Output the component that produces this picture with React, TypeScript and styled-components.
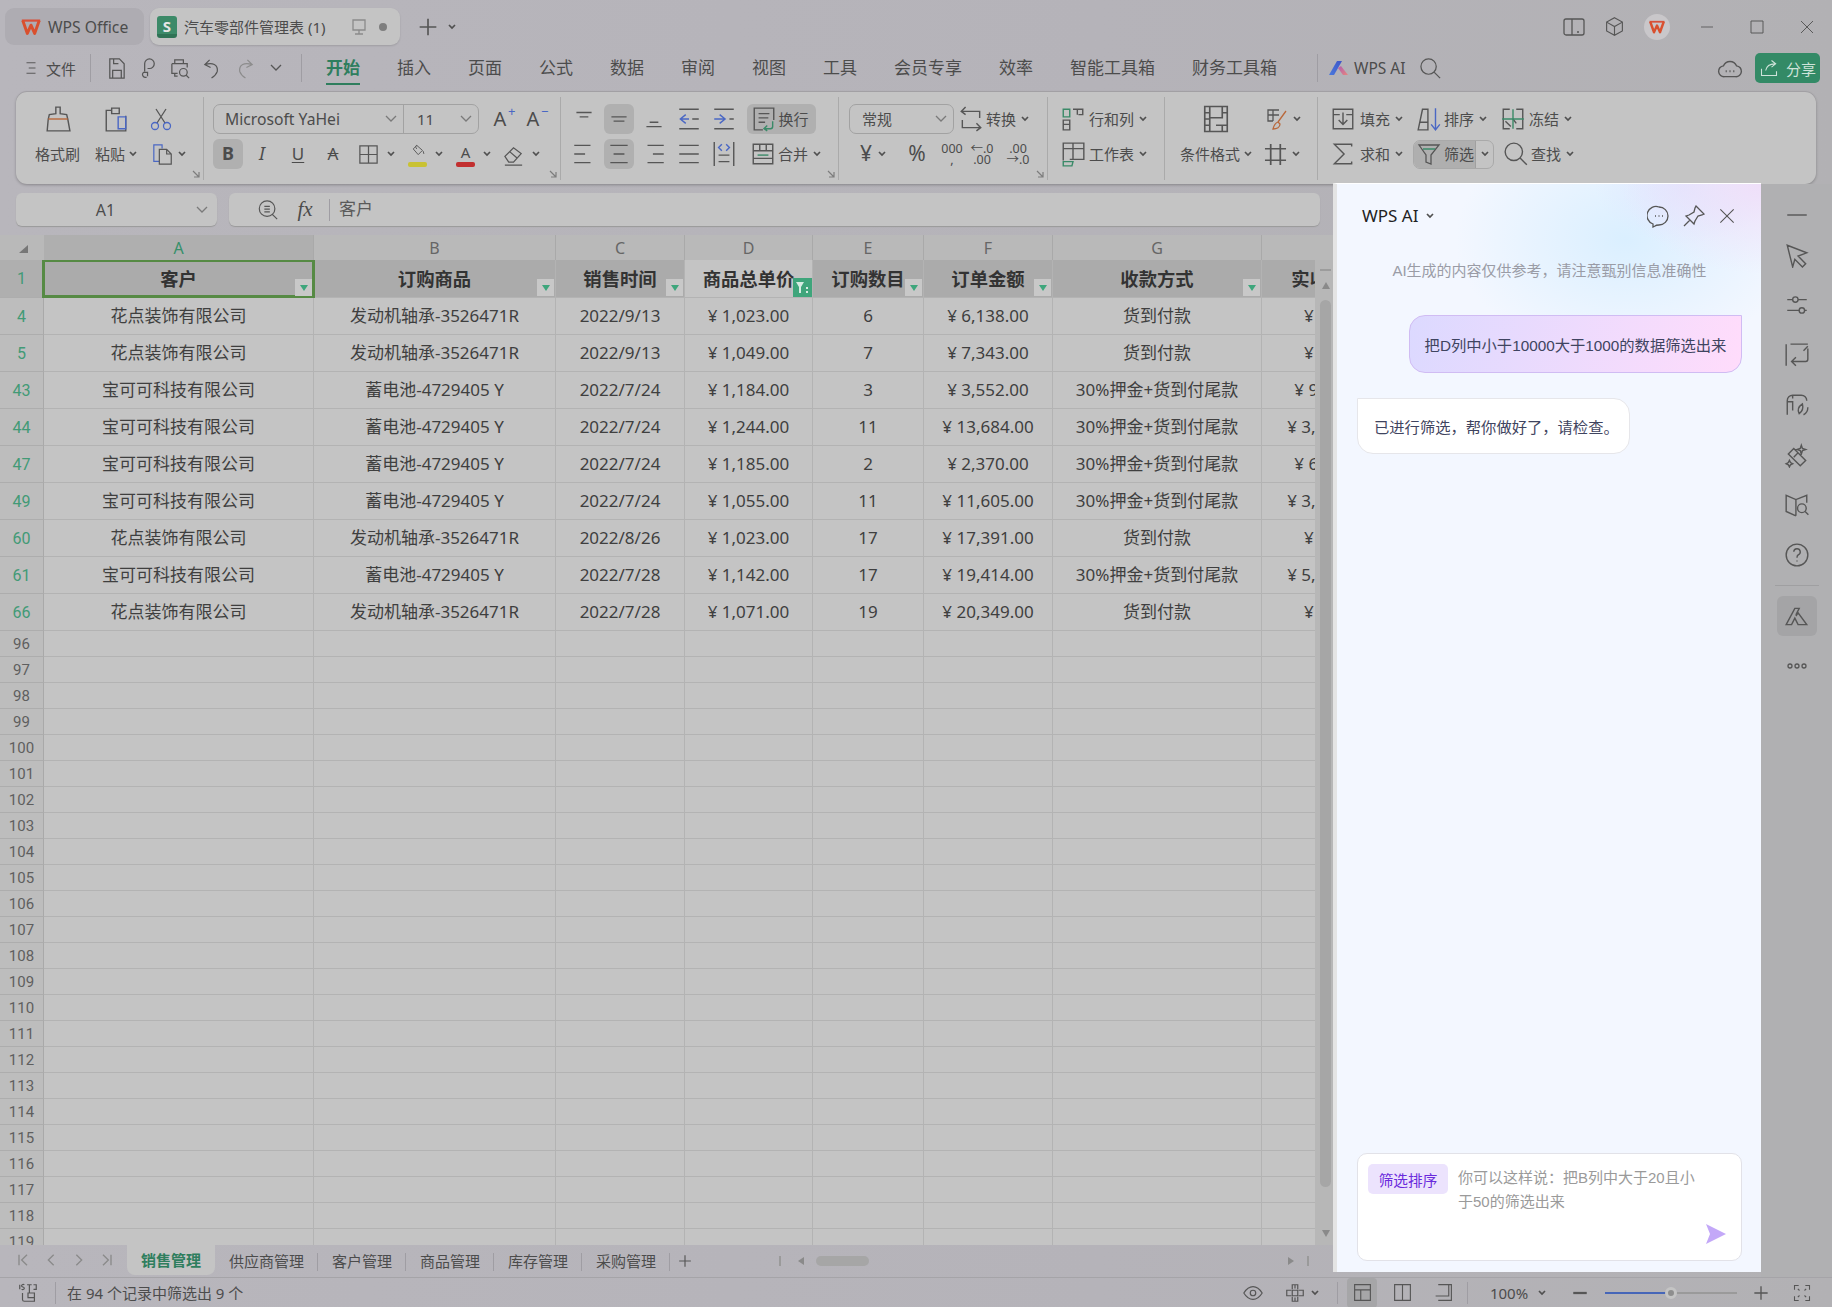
import React from 'react';
import styled, { createGlobalStyle } from 'styled-components';

const GlobalStyle = createGlobalStyle`
  html, body {
    margin: 0;
    padding: 0;
    overflow: hidden;
  }
  * {
    box-sizing: border-box;
  }
`;

const BLUE = '#4a67c4';
const GREEN = '#3a8a68';
const ORANGE = '#b9683b';

const Svg = styled.svg<{ $big?: boolean }>`
  fill: none;
  stroke: #565656;
  stroke-width: 1.3;
  flex: none;
  display: block;
  margin: ${(p) => (p.$big ? '0 -3px' : '0')};
`;

const CaretSvg = styled.svg`
  fill: none;
  stroke: #505050;
  stroke-width: 1.7;
  flex: none;
`;
const Caret = () => (
  <CaretSvg width="8" height="6" viewBox="0 0 8 6">
    <path d="M1 1l3 3 3-3" />
  </CaretSvg>
);
const Chevron = () => (
  <Svg width="14" height="10" viewBox="0 0 14 10" style={{ stroke: '#7a7a7a' }}>
    <path d="M2 2l5 5 5-5" />
  </Svg>
);

const WpsLogo: React.FC<{ s?: number }> = ({ s = 22 }) => (
  <Svg width={s} height={s} viewBox="0 0 24 24">
    <path d="M2 5h20" stroke="#d9503a" strokeWidth="2.4" />
    <path d="M3 5l5 14 4-9 4 9 5-14" stroke="#d9502e" strokeWidth="3.2" strokeLinejoin="round" />
  </Svg>
);

const AiLogo = () => (
  <Svg width="20" height="16" viewBox="0 0 20 16" style={{ stroke: 'none' }}>
    <defs>
      <linearGradient id="aia" x1="0" y1="1" x2="1" y2="0">
        <stop offset="0" stopColor="#4a78dc" />
        <stop offset="1" stopColor="#3f56c8" />
      </linearGradient>
      <linearGradient id="aib" x1="0" y1="0" x2="1" y2="1">
        <stop offset="0" stopColor="#b05fb0" />
        <stop offset="1" stopColor="#e6857f" />
      </linearGradient>
    </defs>
    <path d="M0 15L8 1h5L5 15z" fill="url(#aia)" />
    <path d="M9 8l3-2 7 9h-5z" fill="url(#aib)" />
  </Svg>
);

const icons = {
  hamburger: <path d="M6 5h12M9 12h9M6 19h12" />,
  save: <path d="M5 2h10l5 5v15H5zM8 14h9v8H8zM9 2v5h5" />,
  link: <path d="M10 21a3 3 0 0 1-4-4l1-1h4v4M8 15V7a5 5 0 1 1 5 5h-2" />,
  preview: (
    <>
      <path d="M6 7V3h9v4M3 7h16v4M3 7v10h6M6 17v3h3" />
      <circle cx="15" cy="16" r="4" />
      <path d="M18 19l3 3" />
    </>
  ),
  undo: <path d="M9 3L4 8l6 3M4 8c8-3 14 0 13 7-1 3-3 5-6 7" />,
  redo: <path d="M15 3l5 5-6 3M20 8c-8-3-14 0-13 7 1 3 3 5 6 7" stroke="#8c8c8c" />,
  brush: (
    <>
      <path d="M10 1h4v6l6 1 1 4 2 11H2l1-11 1-4 6-1z" />
      <path d="M3 12h18" stroke={ORANGE} />
    </>
  ),
  paste: (
    <>
      <path d="M8 4H3v19h18V9M8 2h7v5H8z" />
      <path d="M14 10h7v11h-7z" stroke={BLUE} />
    </>
  ),
  scissors: (
    <>
      <path d="M8 16L17 2M16 16L7 2" />
      <circle cx="6" cy="19" r="3.5" stroke={BLUE} />
      <circle cx="18" cy="19" r="3.5" stroke={BLUE} />
    </>
  ),
  copy: (
    <>
      <path d="M8 20H2V2h9v4" stroke={BLUE} />
      <path d="M8 7h8l5 5v11H8zM16 7v5h5" />
    </>
  ),
  border: <path d="M3 3h18v18H3zM12 3v18M3 12h18" />,
  bucket: <path d="M11 2l-5 5 7 8 6-6zM11 2c-2 0-2 3 0 5M20 10l1 4" />,
  eraser: <path d="M3 14l9-9 8 6-8 9H7zM8 9l8 7M3 23h18" />,
  alignTop: <path d="M5 6h14M8 10h8" />,
  alignMid: <path d="M5 10h14M7 14h10" />,
  alignBot: <path d="M8 15h8M5 19h14" />,
  indentL: (
    <>
      <path d="M3 3h18M3 21h18M15 12h6" />
      <path d="M9 8l-5 4 5 4M4 12h8" stroke={BLUE} />
    </>
  ),
  indentR: (
    <>
      <path d="M3 3h18M3 21h18M17 12h4" />
      <path d="M8 8l5 4-5 4M3 12h10" stroke={BLUE} />
    </>
  ),
  left: <path d="M3 4h15M3 12h10M3 20h15" />,
  center: <path d="M4 4h16M7 12h10M4 20h16" />,
  right: <path d="M6 4h15M11 12h10M6 20h15" />,
  justify: <path d="M3 4h18M3 12h18M3 20h18" />,
  distribute: (
    <>
      <path d="M3 1v22M21 1v22M7 13h10M7 19h10" />
      <path d="M10 3L7 6l3 3M14 3l3 3-3 3" stroke={BLUE} />
    </>
  ),
  wrap: (
    <>
      <path d="M21 13V2H3v20h8M7 7h10M7 11h9M7 15h6" />
      <path d="M20 14v5a2 2 0 0 1-2 2h-5M15 18l-3 3 3 2" stroke={GREEN} />
    </>
  ),
  merge: (
    <>
      <path d="M3 3h18v18H3zM3 9h18M9 3v6M15 3v6M3 16h18" />
      <path d="M7 13h10" stroke={GREEN} />
    </>
  ),
  convert: <path d="M7 1L3 5l4 3M3 5h17v6M4 13v7h17M17 16l4 4-4 3" />,
  rowcol: (
    <>
      <path d="M3 3h6v7H3z" stroke={GREEN} />
      <path d="M3 13h6v9H3zM3 17h6M12 3h9v5h-4M16 3v5" />
    </>
  ),
  sheet: (
    <>
      <path d="M3 18V2h19v15H9M3 7h19M12 2v15" />
      <path d="M3 19h9l-1 4H3z" stroke={GREEN} />
    </>
  ),
  cond: <path d="M7 2H3v20h4M17 2h4v20h-4M7 2h10v9H7zM3 7h4M3 12h4M3 17h4M17 7h4M17 17h4M7 11v11h10v-5H12" />,
  paint: (
    <>
      <path d="M14 3H3v11h5M3 8h11M8 3v11" />
      <path d="M21 4l-8 11M13 15c-3 1-4 3-5 7 4 0 7-2 7-5z" stroke={ORANGE} />
    </>
  ),
  cellsize: <path d="M7 1v22M17 1v22M1 6h22M1 18h22" strokeWidth="1.8" />,
  fill: <path d="M3 3h18v18H3zM3 8h6M15 8h6M12 6v11M8 13l4 4 4-4" />,
  sum: <path d="M20 5V3H4l9 9-9 9h16v-2" />,
  sort: (
    <>
      <path d="M2 22L6 3h5v19zM4 15h7" />
      <path d="M18 2v20M14 17l4 5 4-5" stroke={BLUE} />
    </>
  ),
  freeze: (
    <>
      <path d="M9 3H3v18h6M15 3h6v18h-6M5 14l5 5M12 12l3 4" />
      <path d="M2 12h20M12 3v18" stroke={GREEN} />
    </>
  ),
  funnel: (
    <>
      <path d="M2 3h20l-8 10v9l-5-2v-7z" />
      <path d="M6 7h12" stroke={GREEN} />
    </>
  ),
  find: <path d="M10 2a8 8 0 1 0 0 16 8 8 0 0 0 0-16zM16 16l6 6" />,
  zoomDoc: <path d="M11 2a8.500 8.500 0 1 0 0 17 8.500 8.500 0 0 0 0-17zM8 8h6M8 11h6M8 14h6M17 17l5 5" />,
  tablet: <path d="M2 6a2 2 0 0 1 2-2h16a2 2 0 0 1 2 2v12a2 2 0 0 1-2 2H4a2 2 0 0 1-2-2zM10 4v16M15 17h2" />,
  cube: <path d="M12 2l9 5v10l-9 5-9-5V7zM3 7l9 5 9-5M12 12v10" />,
  minus: <path d="M3 12h18" />,
  square: <path d="M4 4h16v16H4z" />,
  close: <path d="M4 4l16 16M20 4L4 20" />,
  plus: <path d="M12 2v20M2 12h20" strokeWidth="2" />,
  cloud: (
    <>
      <path d="M7 20a5 5 0 0 1-1-10 6.500 6.500 0 0 1 12 0 5 5 0 0 1-1 10z" />
      <path d="M8 15h1M11.500 15h1M15 15h1" strokeWidth="1.800" />
    </>
  ),
  share: <path d="M3 13v8h18v-5M8 15c1-5 5-8 11-8M15 3l5 4-5 4" stroke="#cfe3da" />,
  chat: <path d="M12 3a9 9 0 0 1 0 18c-2 0-3 0-4 1l-2 1v-3a9 9 0 0 1 6-17zM8 12h1M11.500 12h1M15 12h1" />,
  pin: <path d="M14 2l8 8-2 1-4 1-3 5-1 3-8-8 3-1 5-3 1-4zM8 16l-6 6" />,
  cursor: <path d="M3 3l18 7-8 3 7 7-3 3-7-7-2 7z" />,
  sliders: (
    <>
      <path d="M3 7h5M13 7h8M3 17h11M19 17h2" />
      <circle cx="10.500" cy="7" r="2.500" />
      <circle cx="16.500" cy="17" r="2.500" />
    </>
  ),
  swap: <path d="M2 2v20M6 2h16M22 6v10a2 2 0 0 1-2 2H7M11 14l-4 4 4 4M18 8l4-4" />,
  aiLeaf: <path d="M3 21V8a5 5 0 0 1 5-5h8a5 5 0 0 1 5 5M3 9h5v8M8 3v3M14 20c-2-4 0-7 3-9 1 4 0 7-3 9zM18 21c2-1 4-3 4-7" />,
  wand: <path d="M4 11l5-5 11 11-5 5zM9 14l4-4M16 3l1 3 3 1-3 1-1 3-1-3-3-1 3-1zM5 17l1 2 2 1-2 1-1 2-1-2-2-1 2-1z" />,
  bookFind: (
    <>
      <path d="M11 22l-9-4V3l9 4 10-4v7M11 7v15" />
      <circle cx="16.500" cy="15" r="4" />
      <path d="M19.500 18l3 3" />
    </>
  ),
  help: <path d="M12 2a10 10 0 1 0 0 20 10 10 0 0 0 0-20zM9 9a3 3 0 1 1 4 3c-1 .5-1 1-1 2.500M12 17v1" />,
  aiMark: <path d="M2 20l8-15h4l-3 6 2-2 8 11h-8l-3-6-3 6zM13 9l-2 3" />,
  dots: (
    <>
      <circle cx="5" cy="12" r="2" />
      <circle cx="12" cy="12" r="2" />
      <circle cx="19" cy="12" r="2" />
    </>
  ),
  first: <path d="M6 4v16M18 4l-8 8 8 8" stroke="#8a8a8a" strokeWidth="2" />,
  prev: <path d="M16 4l-8 8 8 8" stroke="#8a8a8a" strokeWidth="2" />,
  next: <path d="M8 4l8 8-8 8" stroke="#8a8a8a" strokeWidth="2" />,
  last: <path d="M18 4v16M6 4l8 8-8 8" stroke="#8a8a8a" strokeWidth="2" />,
  macro: <path d="M3 3v5M8 3a2 2 0 0 0-3 1c0 2 3 1 3 3a2 2 0 0 1-3 1M11 3h5M13.500 3v9M18 3h3v5h-3M6 12v7a2 2 0 0 0 2 2h11v-9h-7v5h7" />,
  eye: (
    <>
      <path d="M2 12c3-5 6-7 10-7s7 2 10 7c-3 5-6 7-10 7s-7-2-10-7z" />
      <circle cx="12" cy="12" r="3" />
    </>
  ),
  focus: <path d="M9 8V3h6v5M9 16v5h6v-5M8 9H3v6h5M16 9h5v6h-5M9 9h6v6H9zM12 3v4M12 17v4" />,
  viewNormal: <path d="M3 3h18v18H3zM3 9h18M10 9v12" />,
  viewPage: <path d="M3 3h18v18H3zM12 3v18" />,
  viewBreak: <path d="M6 3h12v13H3M18 3h3v18H6" />,
  full: <path d="M3 8V3h5M16 3h5v5M21 16v5h-5M8 21H3v-5M7 7l2 2M17 7l-2 2M7 17l2-2M17 17l-2-2" />,
};

type IconName = keyof typeof icons;
const Icon: React.FC<{ n: IconName; s?: number; big?: boolean; style?: React.CSSProperties }> = ({ n, s = 24, big, style }) => (
  <Svg width={big ? 26 : s} height={big ? 26 : s} viewBox="0 0 24 24" $big={big} style={style}>
    {icons[n]}
  </Svg>
);

const Page = styled.div`
  position: relative;
  width: 1832px;
  height: 1307px;
  overflow: hidden;
  display: flex;
  flex-direction: column;
  background: linear-gradient(90deg, #b8b6bc 0%, #b5b3b9 60%, #b2b1b4 100%);
  font-family: 'Noto Sans', 'Noto Sans CJK SC', sans-serif;
  color: #4c4c4c;
`;

/* title bar */
const TitleBar = styled.div`
  height: 46px;
  flex: none;
  padding: 8px 0 1px 5px;
  display: flex;
  align-items: stretch;
`;
const HomeTab = styled.div`
  width: 139px;
  display: flex;
  align-items: center;
  gap: 6px;
  padding-left: 15px;
  background: #aeacb2;
  border-radius: 9px;
  font-size: 15.7px;
`;
const DocTab = styled.div`
  width: 250px;
  margin-left: 6px;
  display: flex;
  align-items: center;
  padding-left: 7px;
  background: #c4c4c4;
  border-radius: 9px;
  font-size: 15px;
  box-shadow: 0 1px 2px #0002;
`;
const SheetBadge = styled.div`
  width: 20px;
  height: 22px;
  margin-right: 7px;
  border-radius: 3px;
  background: linear-gradient(#3c8a68 82%, #2f7355 82%);
  color: #e6e6e6;
  font-weight: 700;
  font-size: 15px;
  line-height: 20px;
  text-align: center;
`;
const DocStatus = styled.div`
  margin-left: auto;
  padding-right: 13px;
  display: flex;
  align-items: center;
  gap: 12px;
`;
const Dot = styled.span`
  width: 8px;
  height: 8px;
  border-radius: 50%;
  background: #7e7e7e;
`;
const TitleExtras = styled.div`
  margin-left: 18px;
  display: flex;
  align-items: center;
  gap: 10px;
`;
const WindowTools = styled.div`
  margin-left: auto;
  display: flex;
  align-items: center;
`;
const WinBtn = styled.div<{ $w: number }>`
  width: ${(p) => p.$w}px;
  display: flex;
  justify-content: center;
`;
const LogoCircle = styled.div`
  width: 26px;
  height: 26px;
  border-radius: 50%;
  background: #c9c7ca;
  display: flex;
  align-items: center;
  justify-content: center;
`;

/* menu bar */
const MenuBar = styled.div`
  height: 44px;
  margin-bottom: 2px;
  flex: none;
  display: flex;
  align-items: center;
`;
const QuickBtn = styled.div<{ $w: number; $ml?: number; $pl?: number; $gap?: number }>`
  width: ${(p) => p.$w}px;
  margin-left: ${(p) => p.$ml ?? 0}px;
  padding-left: ${(p) => p.$pl ?? 0}px;
  display: flex;
  align-items: center;
  justify-content: center;
  gap: ${(p) => p.$gap ?? 4}px;
  font-size: 15px;
`;
const VSep = styled.div<{ $h?: number; $ml?: number }>`
  width: 1px;
  height: ${(p) => p.$h ?? 28}px;
  margin-left: ${(p) => p.$ml ?? 0}px;
  background: #9f9da3;
  flex: none;
`;
const MenuTabs = styled.div`
  display: flex;
  gap: 37px;
  margin-left: 24px;
  margin-right: 40px;
`;
const MenuTab = styled.div<{ $on?: boolean }>`
  position: relative;
  font-size: 17px;
  line-height: 24px;
  white-space: nowrap;
  color: ${(p) => (p.$on ? '#2f7e5e' : '#4c4c4c')};
  font-weight: ${(p) => (p.$on ? 700 : 400)};
  &::after {
    content: '';
    display: ${(p) => (p.$on ? 'block' : 'none')};
    position: absolute;
    left: 0;
    right: 0;
    bottom: -5px;
    height: 2px;
    background: #2f7e5e;
  }
`;
const AiEntry = styled.div`
  margin-left: 11px;
  display: flex;
  align-items: center;
  gap: 5px;
  font-size: 15.5px;
`;
const MenuRight = styled.div`
  margin-left: auto;
  margin-right: 12px;
  display: flex;
  align-items: center;
  gap: 12px;
`;
const ShareBtn = styled.div`
  width: 65px;
  height: 30px;
  border-radius: 5px;
  background: #338a66;
  color: #cfe3da;
  font-size: 15px;
  display: flex;
  align-items: center;
  justify-content: center;
  gap: 7px;
`;

/* ribbon */
const Ribbon = styled.div`
  height: 92px;
  margin: 0 16px;
  padding-top: 5px;
  flex: none;
  display: flex;
  background: #c4c4c4;
  border-radius: 11px;
  box-shadow: 0 1px 3px #0004, 0 -1px 0 #a8a6aa;
`;
const RGroup = styled.div<{ $w?: number; $last?: boolean }>`
  position: relative;
  ${(p) => (p.$w ? `width: ${p.$w}px;` : 'flex: 1;')}
  height: 83px;
  padding-top: 7px;
  display: flex;
  flex-direction: column;
  gap: 5px;
  ${(p) => (p.$last ? '' : 'border-right: 1px solid #aaa;')}
`;
const RRow = styled.div<{ $pl?: number }>`
  height: 30px;
  padding-left: ${(p) => p.$pl ?? 0}px;
  display: flex;
  align-items: center;
`;
const Tool = styled.div<{ $w: number; $on?: boolean; $ml?: number; $start?: boolean; $gap?: number }>`
  width: ${(p) => p.$w}px;
  height: 30px;
  margin-left: ${(p) => p.$ml ?? 0}px;
  flex: none;
  display: flex;
  align-items: center;
  justify-content: ${(p) => (p.$start ? 'flex-start' : 'center')};
  gap: ${(p) => p.$gap ?? 4}px;
  font-size: 15px;
  line-height: 1.2;
  white-space: nowrap;
  border-radius: 6px;
  background: ${(p) => (p.$on ? '#b0b0b0' : 'transparent')};
`;
const ToolText = styled.span<{ $ml?: number }>`
  margin-left: ${(p) => p.$ml ?? 0}px;
  margin-right: 1px;
`;
const Launcher = styled.svg`
  position: absolute;
  right: 3px;
  bottom: 2px;
  fill: none;
  stroke: #7c7c7c;
  stroke-width: 1.2;
`;
const Corner = () => (
  <Launcher width="8" height="8" viewBox="0 0 8 8">
    <path d="M1 1l6 6M7 2v5H2" />
  </Launcher>
);
const Combo = styled.div<{ $w: number }>`
  width: ${(p) => p.$w}px;
  height: 30px;
  display: flex;
  align-items: stretch;
  border: 1px solid #a2a2a2;
  border-radius: 7px;
  font-size: 15px;
  line-height: 1.2;
`;
const ComboPart = styled.div<{ $w?: number; $pl: number; $fs?: number }>`
  ${(p) => (p.$w ? `width: ${p.$w}px;` : 'flex: 1;')}
  padding: 0 5px 0 ${(p) => p.$pl}px;
  display: flex;
  align-items: center;
  justify-content: space-between;
  font-size: ${(p) => p.$fs ?? 15}px;
  & + & {
    border-left: 1px solid #a2a2a2;
  }
`;
const GlyphA = styled.span`
  position: relative;
  font-size: 20px;
`;
const Sign = styled.span`
  position: absolute;
  top: -3px;
  right: -9px;
  color: ${BLUE};
  font-size: 13px;
`;
const BoldB = styled.span`
  font-size: 18px;
  font-weight: 700;
`;
const YenSign = styled.span`
  font-size: 21px;
`;
const ItalicI = styled.span`
  font-size: 18px;
  font-style: italic;
`;
const UnderU = styled.span`
  font-size: 17px;
  text-decoration: underline;
  text-underline-offset: 2px;
`;
const StrikeA = styled.span`
  font-size: 17px;
  text-decoration: line-through;
`;
const ColorGlyph = styled.div`
  width: 20px;
  height: 26px;
  display: flex;
  flex-direction: column;
  align-items: center;
  justify-content: flex-end;
  font-size: 15px;
  line-height: 18px;
`;
const ColorBar = styled.div<{ $c: string }>`
  width: 19px;
  height: 5px;
  margin-top: 1px;
  border-radius: 2px;
  background: ${(p) => p.$c};
`;
const NumGlyph = styled.div`
  font-size: 12.5px;
  line-height: 11px;
  text-align: center;
`;
const FilterSplit = styled.div`
  width: 81px;
  height: 29px;
  display: flex;
  border: 1px solid #a9a9a9;
  border-radius: 7px;
  overflow: hidden;
  font-size: 15px;
  line-height: 1.2;
`;
const FilterMain = styled.div`
  width: 61px;
  background: #afafaf;
  display: flex;
  align-items: center;
  padding-left: 5px;
  gap: 5px;
  white-space: nowrap;
`;
const FilterDrop = styled.div`
  flex: 1;
  display: flex;
  align-items: center;
  justify-content: center;
  border-left: 1px solid #a0a0a0;
`;

/* work area */
const Workspace = styled.div`
  height: 1093px;
  flex: none;
  display: flex;
`;
const Main = styled.div`
  width: 1761px;
  display: flex;
  flex-direction: column;
`;
const FormulaRow = styled.div`
  height: 51px;
  flex: none;
  padding: 9px 0 9px 16px;
  display: flex;
  gap: 12px;
`;
const NameBox = styled.div`
  width: 201px;
  padding: 0 8px 0 0;
  display: flex;
  align-items: center;
  justify-content: flex-end;
  position: relative;
  background: #c4c4c4;
  border-radius: 6px;
  box-shadow: 0 1px 1px #9a9a9a;
  font-size: 16px;
`;
const NameText = styled.span`
  flex: 1;
  text-align: center;
  padding-right: 22px;
  padding-left: 22px;
`;
const FormulaBox = styled.div`
  width: 1091px;
  display: flex;
  align-items: center;
  background: #c4c4c4;
  border-radius: 6px;
  box-shadow: 0 1px 1px #9a9a9a;
`;
const FxLabel = styled.span`
  width: 40px;
  margin: 0 4px 0 6px;
  font-family: 'Liberation Serif', serif;
  font-style: italic;
  font-size: 21px;
  text-align: center;
`;
const FormulaText = styled.span`
  margin-left: 9px;
  font-size: 17px;
  line-height: 1.2;
  color: #5a5a5a;
`;
const HeaderStrip = styled.div`
  height: 25px;
  flex: none;
  display: flex;
  background: #b9b9b9;
  overflow: hidden;
`;
const ColHead = styled.div<{ $w: number; $on?: boolean }>`
  width: ${(p) => p.$w}px;
  flex: none;
  display: flex;
  align-items: center;
  justify-content: center;
  font-size: 16px;
  color: ${(p) => (p.$on ? '#36906a' : '#666')};
  background: ${(p) => (p.$on ? '#afafaf' : 'transparent')};
  border-right: 1px solid #a9a9a9;
`;
const Corner0 = styled(ColHead)`
  background: #b9b9b9;
  border-right: none;
`;
const SelectAll = styled.span`
  width: 0;
  height: 0;
  margin: 3px 0 0 2px;
  border-left: 9px solid transparent;
  border-bottom: 8px solid #777;
`;
const SheetRow = styled.div`
  flex: 1;
  min-height: 0;
  display: flex;
`;
const SheetBody = styled.div`
  width: 1315px;
  flex: none;
  overflow: hidden;
  background: #c4c4c4;
`;
const Row = styled.div<{ $h: number }>`
  height: ${(p) => p.$h}px;
  display: flex;
`;
const RowHead = styled.div<{ $green?: boolean; $on?: boolean }>`
  width: 44px;
  flex: none;
  display: flex;
  align-items: center;
  justify-content: center;
  background: ${(p) => (p.$on ? '#afafaf' : '#bdbdbd')};
  border-right: 1px solid #a9a9a9;
  border-bottom: 1px solid #adadad;
  color: ${(p) => (p.$green ? '#429a76' : '#5f5f5f')};
  font-size: ${(p) => (p.$green ? 16 : 15)}px;
  font-family: Roboto, 'Noto Sans', sans-serif;
`;
const Cell = styled.div<{ $w: number; $head?: boolean; $light?: boolean }>`
  position: relative;
  width: ${(p) => p.$w}px;
  flex: none;
  padding-top: 1px;
  display: flex;
  align-items: center;
  justify-content: center;
  white-space: nowrap;
  overflow: visible;
  line-height: 1.2;
  font-size: ${(p) => (p.$head ? 18.33 : 17)}px;
  font-weight: ${(p) => (p.$head ? 700 : 400)};
  color: ${(p) => (p.$head ? '#333' : '#3f3f3f')};
  background: ${(p) => (p.$head && !p.$light ? '#ababab' : '#c4c4c4')};
  border-right: 1px solid #b3b3b3;
  border-bottom: 1px solid #b3b3b3;
`;
const Selection = styled.div`
  position: absolute;
  inset: -1px -2px -1px -2px;
  border: 3px solid #568a44;
  z-index: 2;
  pointer-events: none;
  &::after {
    content: '';
    position: absolute;
    right: -3px;
    bottom: -3px;
    width: 5px;
    height: 5px;
    background: #568a44;
  }
`;
const FilterBtn = styled.div`
  position: absolute;
  right: 1px;
  bottom: 1px;
  width: 17px;
  height: 17px;
  z-index: 3;
  background: #c8c8c8;
  display: flex;
  align-items: center;
  justify-content: center;
  &::before {
    content: '';
    border-left: 4px solid transparent;
    border-right: 4px solid transparent;
    border-top: 6px solid #3ea67c;
  }
`;
const FilterOn = styled.div`
  position: absolute;
  right: 0;
  bottom: 0;
  width: 19px;
  height: 19px;
  background: #3fa57b;
  display: flex;
  align-items: center;
  justify-content: center;
`;
const VScroll = styled.div`
  flex: 1;
  display: flex;
  flex-direction: column;
  padding-left: 5px;
  background: #b7b7b7;
`;
const ScrollCol = styled.div`
  width: 11px;
  height: 100%;
  display: flex;
  flex-direction: column;
  align-items: center;
`;
const SplitMark = styled.div`
  width: 11px;
  height: 2px;
  margin-top: 9px;
  background: #9c9c9c;
`;
const ArrowUp = styled.div`
  margin-top: 11px;
  border-left: 4px solid transparent;
  border-right: 4px solid transparent;
  border-bottom: 7px solid #8a8a8a;
`;
const Thumb = styled.div`
  width: 11px;
  height: 887px;
  margin-top: 11px;
  border-radius: 6px;
  background: #a6a6a6;
`;
const ArrowDown = styled.div`
  margin-top: 43px;
  border-left: 4px solid transparent;
  border-right: 4px solid transparent;
  border-top: 7px solid #8a8a8a;
`;

/* sheet tabs */
const TabBar = styled.div`
  height: 32px;
  flex: none;
  display: flex;
  align-items: flex-start;
`;
const SheetNav = styled.div`
  width: 127px;
  height: 30px;
  padding-left: 15px;
  display: flex;
  align-items: center;
  gap: 12px;
`;
const SheetTab = styled.div<{ $on?: boolean }>`
  height: 30px;
  padding: ${(p) => (p.$on ? '0 14px' : '2px 13px 0 14px')};
  display: flex;
  align-items: center;
  font-size: 15px;
  line-height: 1.2;
  white-space: nowrap;
  border-radius: 0 0 8px 8px;
  background: ${(p) => (p.$on ? '#c4c4c4' : 'transparent')};
  color: ${(p) => (p.$on ? '#2f7e5e' : '#4c4c4c')};
  font-weight: ${(p) => (p.$on ? 700 : 400)};
`;
const TabSep = styled.div`
  width: 1px;
  height: 18px;
  margin-top: 8px;
  background: #9f9da3;
`;
const AddTab = styled.div`
  margin-left: 8px;
  height: 30px;
  padding-top: 2px;
  display: flex;
  align-items: center;
`;
const HScroll = styled.div`
  margin-left: 87px;
  width: 530px;
  height: 30px;
  padding-top: 2px;
  display: flex;
  align-items: center;
`;
const HBar = styled.div<{ $ml?: number }>`
  width: 2px;
  height: 10px;
  margin-left: ${(p) => p.$ml ?? 0}px;
  background: #9a9a9a;
`;
const HLeft = styled.div`
  margin-left: 17px;
  border-top: 4px solid transparent;
  border-bottom: 4px solid transparent;
  border-right: 6px solid #8a8a8a;
`;
const HThumb = styled.div`
  width: 54px;
  height: 10px;
  margin-left: 12px;
  border-radius: 5px;
  background: #a6a6a6;
`;
const HRight = styled.div`
  margin-left: 419px;
  border-top: 4px solid transparent;
  border-bottom: 4px solid transparent;
  border-left: 6px solid #8a8a8a;
`;

/* right rail */
const Rail = styled.div`
  width: 71px;
  flex: none;
  padding-top: 11px;
  display: flex;
  flex-direction: column;
  align-items: center;
  gap: 10px;
  background: #b0b0b2;
`;
const RailItem = styled.div<{ $on?: boolean; $tight?: boolean }>`
  width: 40px;
  height: 40px;
  flex: none;
  display: flex;
  align-items: center;
  justify-content: center;
  border-radius: 6px;
  margin-bottom: ${(p) => (p.$tight ? -10 : 0)}px;
  background: ${(p) => (p.$on ? '#a4a4a6' : 'transparent')};
`;
const RailSep = styled.div`
  width: 44px;
  height: 1px;
  flex: none;
  background: #9f9fa1;
`;

/* status bar */
const StatusBar = styled.div`
  height: 30px;
  flex: none;
  display: flex;
  align-items: center;
  border-top: 1px solid #a5a4a8;
  font-size: 15px;
  line-height: 1.2;
`;
const StatusText = styled.span`
  margin-left: 11px;
`;
const StatusBtn = styled.div<{ $w: number; $on?: boolean; $ml?: number; $gap?: number }>`
  width: ${(p) => p.$w}px;
  height: 30px;
  margin-left: ${(p) => p.$ml ?? 0}px;
  display: flex;
  align-items: center;
  justify-content: center;
  gap: ${(p) => p.$gap ?? 5}px;
  flex: none;
  background: ${(p) => (p.$on ? '#a6a6a8' : 'transparent')};
  border-radius: 4px;
`;
const StatusRight = styled.div`
  margin-left: auto;
  display: flex;
  align-items: center;
  padding-right: 8px;
`;
const ZoomTrack = styled.div`
  position: relative;
  width: 132px;
  height: 2px;
  margin: 0 5px;
  background: #9a9a9a;
`;
const ZoomFill = styled.div`
  width: 66px;
  height: 2px;
  background: #4666b8;
`;
const ZoomKnob = styled.div`
  position: absolute;
  left: 60px;
  top: -5px;
  width: 12px;
  height: 12px;
  border-radius: 50%;
  background: #8e8e8e;
  border: 3px solid #c4c4c4;
`;

/* AI panel, floats over the sheet */
const Panel = styled.div`
  position: absolute;
  left: 1333px;
  top: 183px;
  width: 428px;
  height: 1089px;
  padding: 0 19px 11px 20px;
  display: flex;
  flex-direction: column;
  border-left: 4px solid #e4e4e4;
  border-top: 1px solid #fff;
  font-family: 'Liberation Sans', 'Noto Sans CJK SC', sans-serif;
  color: #3f4460;
  background:
    radial-gradient(ellipse 140px 90px at 100% 0, #efdff9 0%, #efdff900 100%),
    radial-gradient(ellipse 90px 60px at 82% 0, #dfe6ff 0%, #dfe6ff00 100%),
    radial-gradient(ellipse 170px 120px at 68% 55px, #daefff 0%, #daefff00 100%),
    #f3f7ff;
`;
const PanelHead = styled.div`
  height: 63px;
  flex: none;
  padding: 0 5px;
  display: flex;
  align-items: center;
  gap: 11px;
`;
const PanelTitle = styled.div`
  margin-right: auto;
  display: flex;
  align-items: center;
  gap: 8px;
  font-family: 'Noto Sans', sans-serif;
  font-size: 17px;
  color: #222;
`;
const Disclaimer = styled.div`
  margin-top: 14px;
  height: 20px;
  line-height: 20px;
  text-align: center;
  font-size: 15px;
  color: #9a9ca6;
`;
const UserBubble = styled.div`
  align-self: flex-end;
  width: 333px;
  height: 58px;
  margin-top: 34px;
  display: flex;
  align-items: center;
  justify-content: center;
  font-size: 15.3px;
  white-space: nowrap;
  border: 1px solid #d0bcf3;
  border-radius: 16px 0 16px 16px;
  background: linear-gradient(100deg, #dcd9ff 0%, #ffdcfb 100%);
`;
const AiBubble = styled.div`
  align-self: flex-start;
  width: 273px;
  height: 56px;
  margin-top: 25px;
  padding-left: 16px;
  display: flex;
  align-items: center;
  font-size: 15.3px;
  white-space: nowrap;
  background: #fff;
  border: 1px solid #e6e6ea;
  border-radius: 0 16px 16px 16px;
`;
const InputBox = styled.div`
  margin-top: auto;
  height: 108px;
  padding: 10px 14px 15px 10px;
  display: flex;
  flex-direction: column;
  background: #fff;
  border: 1px solid #e2e2e8;
  border-radius: 10px;
`;
const InputTop = styled.div`
  display: flex;
  gap: 10px;
`;
const Chip = styled.div`
  width: 80px;
  height: 30px;
  flex: none;
  display: flex;
  align-items: center;
  justify-content: center;
  border-radius: 5px;
  font-size: 14.67px;
  color: #6a2bdc;
  background: #ece3fd;
`;
const Hint = styled.div`
  padding-top: 2px;
  font-size: 15px;
  line-height: 24px;
  color: #9a9a9a;
  white-space: nowrap;
`;
const SendIcon = styled.svg`
  margin-top: auto;
  align-self: flex-end;
  fill: #c3a8f8;
`;

const COLS = [270, 242, 129, 128, 111, 129, 209, 133];
const LETTERS = ['A', 'B', 'C', 'D', 'E', 'F', 'G'];
const HEADS = ['客户', '订购商品', '销售时间', '商品总单价', '订购数目', '订单金额', '收款方式', '实收金额'];
const A1 = '花点装饰有限公司';
const B1 = '发动机轴承-3526471R';
const A2 = '宝可可科技有限公司';
const B2 = '蓄电池-4729405 Y';
const G1 = '货到付款';
const G2 = '30%押金+货到付尾款';

const ROWS: [number, string, string, string, string, string, string, string, string][] = [
  [4, A1, B1, '2022/9/13', '¥ 1,023.00', '6', '¥ 6,138.00', G1, '¥ 0.00'],
  [5, A1, B1, '2022/9/13', '¥ 1,049.00', '7', '¥ 7,343.00', G1, '¥ 0.00'],
  [43, A2, B2, '2022/7/24', '¥ 1,184.00', '3', '¥ 3,552.00', G2, '¥ 952.00'],
  [44, A2, B2, '2022/7/24', '¥ 1,244.00', '11', '¥ 13,684.00', G2, '¥ 3,684.00'],
  [47, A2, B2, '2022/7/24', '¥ 1,185.00', '2', '¥ 2,370.00', G2, '¥ 670.00'],
  [49, A2, B2, '2022/7/24', '¥ 1,055.00', '11', '¥ 11,605.00', G2, '¥ 3,405.00'],
  [60, A1, B1, '2022/8/26', '¥ 1,023.00', '17', '¥ 17,391.00', G1, '¥ 0.00'],
  [61, A2, B2, '2022/7/28', '¥ 1,142.00', '17', '¥ 19,414.00', G2, '¥ 5,414.00'],
  [66, A1, B1, '2022/7/28', '¥ 1,071.00', '19', '¥ 20,349.00', G1, '¥ 0.00'],
];
const BLANKS = Array.from({ length: 24 }, (_, i) => 96 + i);

const MENU = ['插入', '页面', '公式', '数据', '审阅', '视图', '工具', '会员专享', '效率', '智能工具箱', '财务工具箱'];
const SHEETS = ['供应商管理', '客户管理', '商品管理', '库存管理', '采购管理'];
const RAIL: IconName[] = ['cursor', 'sliders', 'swap', 'aiLeaf', 'wand', 'bookFind', 'help'];

const IconLabel: React.FC<{ n: IconName; label: string; w: number; ml?: number; gap?: number }> = ({ n, label, w, ml, gap = 3 }) => (
  <Tool $w={w} $ml={ml} $start>
    <Icon n={n} big />
    <ToolText $ml={gap}>{label}</ToolText>
    <Caret />
  </Tool>
);

const App: React.FC = () => (
  <Page>
    <GlobalStyle />
    <TitleBar>
      <HomeTab>
        <WpsLogo />
        WPS Office
      </HomeTab>
      <DocTab>
        <SheetBadge>S</SheetBadge>
        汽车零部件管理表 (1)
        <DocStatus>
          <Svg width="16" height="18" viewBox="0 0 16 18" style={{ stroke: '#8a8a8a' }}>
            <path d="M2 2h12v10H2zM8 12v4M4 16h8" />
          </Svg>
          <Dot />
        </DocStatus>
      </DocTab>
      <TitleExtras>
        <Icon n="plus" s={20} />
        <Caret />
      </TitleExtras>
      <WindowTools>
        <WinBtn $w={44}>
          <Icon n="tablet" s={24} />
        </WinBtn>
        <WinBtn $w={36}>
          <Icon n="cube" s={21} />
        </WinBtn>
        <WinBtn $w={50}>
          <LogoCircle>
            <WpsLogo s={18} />
          </LogoCircle>
        </WinBtn>
        <WinBtn $w={50}>
          <Icon n="minus" s={16} />
        </WinBtn>
        <WinBtn $w={50}>
          <Icon n="square" s={18} />
        </WinBtn>
        <WinBtn $w={50}>
          <Icon n="close" s={18} />
        </WinBtn>
      </WindowTools>
    </TitleBar>

    <MenuBar>
      <QuickBtn $w={90} $pl={8} $gap={6}>
        <Icon n="hamburger" s={18} />
        文件
      </QuickBtn>
      <VSep />
      <QuickBtn $w={32} $ml={9}>
        <Icon n="save" s={23} />
      </QuickBtn>
      <QuickBtn $w={32}>
        <Icon n="link" s={23} />
      </QuickBtn>
      <QuickBtn $w={32}>
        <Icon n="preview" s={23} />
      </QuickBtn>
      <QuickBtn $w={32}>
        <Icon n="undo" s={23} />
      </QuickBtn>
      <QuickBtn $w={32}>
        <Icon n="redo" s={23} />
      </QuickBtn>
      <QuickBtn $w={32}>
        <Svg width="14" height="10" viewBox="0 0 14 10">
          <path d="M2 2l5 5 5-5" />
        </Svg>
      </QuickBtn>
      <VSep $ml={9} />
      <MenuTabs>
        <MenuTab $on>开始</MenuTab>
        {MENU.map((m) => (
          <MenuTab key={m}>{m}</MenuTab>
        ))}
      </MenuTabs>
      <VSep />
      <AiEntry>
        <AiLogo />
        WPS AI
      </AiEntry>
      <Icon n="find" s={23} style={{ marginLeft: 13 }} />
      <MenuRight>
        <Icon n="cloud" s={26} />
        <ShareBtn>
          <Icon n="share" s={20} />
          分享
        </ShareBtn>
      </MenuRight>
    </MenuBar>

    <Ribbon>
      <RGroup $w={188}>
        <RRow>
          <Tool $w={84}>
            <Icon n="brush" s={26} />
          </Tool>
          <Tool $w={32}>
            <Icon n="paste" s={26} />
          </Tool>
          <Tool $w={58}>
            <Icon n="scissors" s={24} />
          </Tool>
        </RRow>
        <RRow $pl={20}>
          <Tool $w={43}>格式刷</Tool>
          <Tool $w={40} $ml={16} $start>
            粘贴
            <Caret />
          </Tool>
          <Tool $w={36} $ml={16}>
            <Icon n="copy" s={22} />
            <Caret />
          </Tool>
        </RRow>
        <Corner />
      </RGroup>

      <RGroup $w={357}>
        <RRow $pl={9}>
          <Combo $w={266}>
            <ComboPart $w={189} $pl={11} $fs={15.7}>
              Microsoft YaHei
              <Chevron />
            </ComboPart>
            <ComboPart $pl={13}>
              11
              <Chevron />
            </ComboPart>
          </Combo>
          <Tool $w={42}>
            <GlyphA>
              A<Sign>+</Sign>
            </GlyphA>
          </Tool>
          <Tool $w={24}>
            <GlyphA>
              A<Sign>−</Sign>
            </GlyphA>
          </Tool>
        </RRow>
        <RRow $pl={9}>
          <Tool $w={30} $on>
            <BoldB>B</BoldB>
          </Tool>
          <Tool $w={38}>
            <ItalicI>I</ItalicI>
          </Tool>
          <Tool $w={34}>
            <UnderU>U</UnderU>
          </Tool>
          <Tool $w={36}>
            <StrikeA>A</StrikeA>
          </Tool>
          <Tool $w={50} $gap={7}>
            <Icon n="border" s={23} />
            <Caret />
          </Tool>
          <Tool $w={48} $gap={7}>
            <ColorGlyph>
              <Icon n="bucket" s={17} />
              <ColorBar $c="#c9c233" />
            </ColorGlyph>
            <Caret />
          </Tool>
          <Tool $w={48} $gap={7}>
            <ColorGlyph>
              A
              <ColorBar $c="#c22f2f" />
            </ColorGlyph>
            <Caret />
          </Tool>
          <Tool $w={48} $gap={7}>
            <Icon n="eraser" s={23} />
            <Caret />
          </Tool>
        </RRow>
        <Corner />
      </RGroup>

      <RGroup $w={278}>
        <RRow $pl={8}>
          <Tool $w={30}>
            <Icon n="alignTop" big />
          </Tool>
          <Tool $w={30} $ml={5} $on>
            <Icon n="alignMid" big />
          </Tool>
          <Tool $w={30} $ml={5}>
            <Icon n="alignBot" big />
          </Tool>
          <Tool $w={30} $ml={5}>
            <Icon n="indentL" big />
          </Tool>
          <Tool $w={30} $ml={5}>
            <Icon n="indentR" big />
          </Tool>
          <Tool $w={69} $ml={8} $on>
            <Icon n="wrap" big />
            换行
          </Tool>
        </RRow>
        <RRow $pl={8}>
          <Tool $w={30}>
            <Icon n="left" big />
          </Tool>
          <Tool $w={30} $ml={5} $on>
            <Icon n="center" big />
          </Tool>
          <Tool $w={30} $ml={5}>
            <Icon n="right" big />
          </Tool>
          <Tool $w={30} $ml={5}>
            <Icon n="justify" big />
          </Tool>
          <Tool $w={30} $ml={5}>
            <Icon n="distribute" big />
          </Tool>
          <Tool $w={79} $ml={14} $start $gap={5}>
            <Icon n="merge" big />
            合并
            <Caret />
          </Tool>
        </RRow>
        <Corner />
      </RGroup>

      <RGroup $w={209}>
        <RRow $pl={10}>
          <Combo $w={105}>
            <ComboPart $pl={12}>
              常规
              <Chevron />
            </ComboPart>
          </Combo>
          <Tool $w={80} $ml={7} $start>
            <Icon n="convert" big />
            <ToolText $ml={1}>转换</ToolText>
            <Caret />
          </Tool>
        </RRow>
        <RRow $pl={10}>
          <Tool $w={48} $gap={6}>
            <YenSign>¥</YenSign>
            <Caret />
          </Tool>
          <Tool $w={40}>
            <YenSign>%</YenSign>
          </Tool>
          <Tool $w={30}>
            <NumGlyph>
              000
              <br />,
            </NumGlyph>
          </Tool>
          <Tool $w={30}>
            <NumGlyph>
              ←.0
              <br />
              .00
            </NumGlyph>
          </Tool>
          <Tool $w={42}>
            <NumGlyph>
              .00
              <br />
              →.0
            </NumGlyph>
          </Tool>
        </RRow>
        <Corner />
      </RGroup>

      <RGroup $w={117}>
        <RRow $pl={15}>
          <IconLabel n="rowcol" label="行和列" w={100} gap={2} />
        </RRow>
        <RRow $pl={15}>
          <IconLabel n="sheet" label="工作表" w={100} gap={2} />
        </RRow>
      </RGroup>

      <RGroup $w={153}>
        <RRow>
          <Tool $w={102}>
            <Icon n="cond" s={30} />
          </Tool>
          <Tool $w={39} $ml={-4} $gap={4}>
            <Icon n="paint" s={24} />
            <Caret />
          </Tool>
        </RRow>
        <RRow>
          <Tool $w={102}>
            条件格式
            <Caret />
          </Tool>
          <Tool $w={39} $ml={-5} $gap={5}>
            <Icon n="cellsize" s={23} />
            <Caret />
          </Tool>
        </RRow>
      </RGroup>

      <RGroup $last>
        <RRow $pl={15}>
          <IconLabel n="fill" label="填充" w={80} gap={3} />
          <IconLabel n="sort" label="排序" w={84} ml={6} gap={1} />
          <IconLabel n="freeze" label="冻结" w={80} gap={2} />
        </RRow>
        <RRow $pl={15}>
          <IconLabel n="sum" label="求和" w={80} gap={3} />
          <FilterSplit>
            <FilterMain>
              <Icon n="funnel" s={24} style={{ margin: '0 -2px' }} />
              筛选
            </FilterMain>
            <FilterDrop>
              <Caret />
            </FilterDrop>
          </FilterSplit>
          <IconLabel n="find" label="查找" w={80} ml={12} gap={1} />
        </RRow>
      </RGroup>
    </Ribbon>

    <Workspace>
      <Main>
        <FormulaRow>
          <NameBox>
            <NameText>A1</NameText>
            <Chevron />
          </NameBox>
          <FormulaBox>
            <Icon n="zoomDoc" s={22} style={{ marginLeft: 28 }} />
            <FxLabel>fx</FxLabel>
            <VSep $h={22} />
            <FormulaText>客户</FormulaText>
          </FormulaBox>
        </FormulaRow>

        <HeaderStrip>
          <Corner0 $w={44}>
            <SelectAll />
          </Corner0>
          {COLS.map((w, i) => (
            <ColHead key={i} $w={w} $on={i === 0}>
              {LETTERS[i]}
            </ColHead>
          ))}
        </HeaderStrip>

        <SheetRow>
          <SheetBody>
            <Row $h={38}>
              <RowHead $green $on>
                1
              </RowHead>
              {COLS.map((w, i) => (
                <Cell key={HEADS[i]} $w={w} $head $light={i === 3}>
                  {HEADS[i]}
                  {i === 0 && <Selection />}
                  {i === 3 ? (
                    <FilterOn>
                      <Svg width="13" height="13" viewBox="0 0 13 13" style={{ fill: '#d6ebe2', stroke: 'none' }}>
                        <path d="M0 1h8L5 6v6H3V6zM10 6h2v2h-2zM10 10h2v2h-2z" />
                      </Svg>
                    </FilterOn>
                  ) : (
                    <FilterBtn />
                  )}
                </Cell>
              ))}
            </Row>
            {ROWS.map((r) => (
              <Row key={r[0]} $h={37}>
                <RowHead $green>{r[0]}</RowHead>
                {COLS.map((w, i) => (
                  <Cell key={i} $w={w}>
                    {r[i + 1]}
                  </Cell>
                ))}
              </Row>
            ))}
            {BLANKS.map((n) => (
              <Row key={n} $h={26}>
                <RowHead>{n}</RowHead>
                {COLS.map((w, i) => (
                  <Cell key={i} $w={w} />
                ))}
              </Row>
            ))}
          </SheetBody>
          <VScroll>
            <ScrollCol>
              <SplitMark />
              <ArrowUp />
              <Thumb />
              <ArrowDown />
            </ScrollCol>
          </VScroll>
        </SheetRow>

        <TabBar>
          <SheetNav>
            <Icon n="first" s={16} />
            <Icon n="prev" s={16} />
            <Icon n="next" s={16} />
            <Icon n="last" s={16} />
          </SheetNav>
          <SheetTab $on>销售管理</SheetTab>
          <SheetTab>{SHEETS[0]}</SheetTab>
          {SHEETS.slice(1).map((s) => (
            <React.Fragment key={s}>
              <TabSep />
              <SheetTab>{s}</SheetTab>
            </React.Fragment>
          ))}
          <TabSep />
          <AddTab>
            <Icon n="plus" s={14} />
          </AddTab>
          <HScroll>
            <HBar />
            <HLeft />
            <HThumb />
            <HRight />
            <HBar $ml={13} />
          </HScroll>
        </TabBar>
      </Main>

      <Rail>
        <RailItem $tight>
          <Icon n="minus" s={26} />
        </RailItem>
        {RAIL.map((n) => (
          <RailItem key={n}>
            <Icon n={n} s={26} />
          </RailItem>
        ))}
        <RailSep />
        <RailItem $on>
          <Icon n="aiMark" s={26} />
        </RailItem>
        <RailItem>
          <Icon n="dots" s={24} />
        </RailItem>
      </Rail>
    </Workspace>

    <StatusBar>
      <StatusBtn $w={55}>
        <Icon n="macro" s={22} />
      </StatusBtn>
      <VSep $h={22} />
      <StatusText>在 94 个记录中筛选出 9 个</StatusText>
      <StatusRight>
        <StatusBtn $w={40}>
          <Icon n="eye" s={22} />
        </StatusBtn>
        <StatusBtn $w={50} $ml={3}>
          <Icon n="focus" s={22} />
          <Caret />
        </StatusBtn>
        <VSep $h={22} $ml={11} />
        <StatusBtn $w={30} $on $ml={9}>
          <Icon n="viewNormal" s={21} />
        </StatusBtn>
        <StatusBtn $w={40} $ml={5}>
          <Icon n="viewPage" s={21} />
        </StatusBtn>
        <StatusBtn $w={40} $ml={1}>
          <Icon n="viewBreak" s={21} />
        </StatusBtn>
        <VSep $h={22} $ml={4} />
        <StatusBtn $w={84} $ml={8} $gap={10}>
          100%
          <Caret />
        </StatusBtn>
        <StatusBtn $w={40}>
          <Icon n="minus" s={18} style={{ strokeWidth: 3 }} />
        </StatusBtn>
        <ZoomTrack>
          <ZoomFill />
          <ZoomKnob />
        </ZoomTrack>
        <StatusBtn $w={38}>
          <Icon n="plus" s={16} />
        </StatusBtn>
        <StatusBtn $w={44}>
          <Icon n="full" s={20} />
        </StatusBtn>
      </StatusRight>
    </StatusBar>

    <Panel>
      <PanelHead>
        <PanelTitle>
          WPS AI
          <Caret />
        </PanelTitle>
        <Icon n="chat" s={24} />
        <Icon n="pin" s={24} />
        <Icon n="close" s={20} />
      </PanelHead>
      <Disclaimer>AI生成的内容仅供参考，请注意甄别信息准确性</Disclaimer>
      <UserBubble>把D列中小于10000大于1000的数据筛选出来</UserBubble>
      <AiBubble>已进行筛选，帮你做好了，请检查。</AiBubble>
      <InputBox>
        <InputTop>
          <Chip>筛选排序</Chip>
          <Hint>
            你可以这样说：把B列中大于20且小
            <br />
            于50的筛选出来
          </Hint>
        </InputTop>
        <SendIcon width="22" height="22" viewBox="0 0 22 22">
          <path d="M1 1l20 10L1 21l4-10z" />
        </SendIcon>
      </InputBox>
    </Panel>
  </Page>
);

export default App;
